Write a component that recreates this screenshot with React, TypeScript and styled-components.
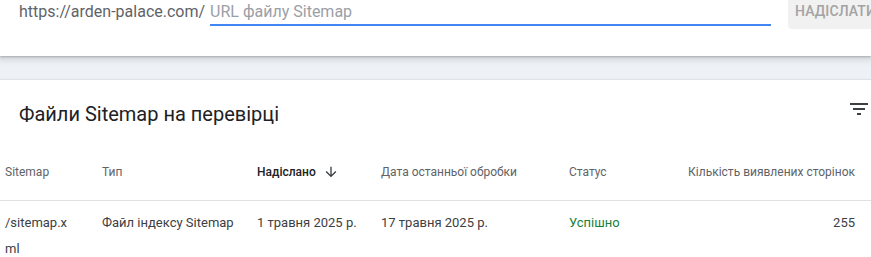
import styled, { createGlobalStyle } from 'styled-components';

const GlobalStyle = createGlobalStyle`
  html, body {
    margin: 0;
    padding: 0;
    background: #eef1f5;
    font-family: Roboto, 'Noto Sans', Arial, sans-serif;
    overflow: hidden;
  }
`;

const Page = styled.div`
  width: 871px;
  height: 257px;
  overflow: hidden;
`;

const SubmitBar = styled.div`
  display: flex;
  align-items: flex-start;
  height: 56px;
  padding-left: 19px;
  background: #fff;
  box-shadow: 0 1px 2px rgba(60, 64, 67, 0.3), 0 2px 6px 2px rgba(60, 64, 67, 0.15);
  position: relative;
  z-index: 1;
  overflow: hidden;
`;

const Prefix = styled.span`
  flex-shrink: 0;
  font-size: 16px;
  line-height: 24px;
  color: #5f6368;
  white-space: nowrap;
  margin-right: 5px;
`;

const UrlInput = styled.input`
  flex-shrink: 0;
  width: 561px;
  height: 26px;
  box-sizing: content-box;
  padding: 0;
  border: none;
  border-bottom: 2px solid #4285f4;
  outline: none;
  font-family: inherit;
  font-size: 16px;
  line-height: 24px;
  color: #202124;
  background: transparent;
  margin-top: -2px;
  &::placeholder {
    color: #9aa0a6;
  }
`;

const SubmitButton = styled.button`
  flex-shrink: 0;
  margin-left: 17px;
  margin-top: -7px;
  height: 36px;
  padding: 0 7px;
  border: none;
  border-radius: 4px;
  background: #f1f1f1;
  color: #a3a3a3;
  font-family: inherit;
  font-size: 14px;
  font-weight: 500;
  letter-spacing: 0.1px;
  white-space: nowrap;
`;

const Card = styled.section`
  margin-top: 24px;
  background: #fff;
  box-shadow: 0 -1px 1px rgba(60, 64, 67, 0.08);
`;

const CardHeader = styled.div`
  display: flex;
  align-items: center;
  justify-content: space-between;
  height: 60px;
  padding: 0 0 0 19px;
`;

const Title = styled.h2`
  margin: 0;
  margin-top: 7px;
  font-size: 20px;
  font-weight: 400;
  color: #202124;
`;

const IconButton = styled.span`
  display: flex;
  width: 24px;
  height: 24px;
  margin-bottom: 3px;
  color: #3c4043;
`;

const Row = styled.div<{ $head?: boolean }>`
  display: grid;
  grid-template-columns: 97px 155px 124px 188px 119px 1fr;
  padding: 0 16px 0 5px;
  font-size: ${(p) => (p.$head ? '12px' : '13px')};
  color: ${(p) => (p.$head ? '#5f6368' : '#3c4043')};
  align-items: ${(p) => (p.$head ? 'center' : 'start')};
  height: ${(p) => (p.$head ? '56px' : 'auto')};
  margin-top: ${(p) => (p.$head ? '4px' : '0')};
  border-bottom: ${(p) => (p.$head ? '1px solid #e0e0e0' : 'none')};
  line-height: ${(p) => (p.$head ? '16px' : '26px')};
  padding-top: ${(p) => (p.$head ? '0' : '9px')};
`;

const Cell = styled.div<{ $right?: boolean; $active?: boolean; $wrap?: boolean; $ok?: boolean }>`
  display: flex;
  align-items: center;
  justify-content: ${(p) => (p.$right ? 'flex-end' : 'flex-start')};
  font-weight: ${(p) => (p.$active ? 500 : 400)};
  color: ${(p) => (p.$active ? '#202124' : p.$ok ? '#188038' : 'inherit')};
  ${(p) => (p.$wrap ? 'max-width: 68px; word-break: break-all;' : 'white-space: nowrap;')}
`;

const SortArrow = styled.svg`
  width: 16px;
  height: 16px;
  margin-left: 7px;
  fill: #3c4043;
`;

export default function App() {
  return (
    <Page>
      <GlobalStyle />
      <SubmitBar>
        <Prefix>https://arden-palace.com/</Prefix>
        <UrlInput placeholder="URL файлу Sitemap" />
        <SubmitButton>НАДІСЛАТИ</SubmitButton>
      </SubmitBar>
      <Card>
        <CardHeader>
          <Title>Файли Sitemap на перевірці</Title>
          <IconButton>
            <svg viewBox="0 0 24 24" width="24" height="24" fill="currentColor">
              <path d="M10 18h4v-2h-4v2zM3 6v2h18V6H3zm3 7h12v-2H6v2z" />
            </svg>
          </IconButton>
        </CardHeader>
        <Row $head>
          <Cell>Sitemap</Cell>
          <Cell>Тип</Cell>
          <Cell $active>
            Надіслано
            <SortArrow viewBox="0 0 24 24">
              <path d="M20 12l-1.41-1.41L13 16.17V4h-2v12.17l-5.58-5.59L4 12l8 8 8-8z" />
            </SortArrow>
          </Cell>
          <Cell>Дата останньої обробки</Cell>
          <Cell>Статус</Cell>
          <Cell $right>Кількість виявлених сторінок</Cell>
        </Row>
        <Row>
          <Cell $wrap>/sitemap.xml</Cell>
          <Cell>Файл індексу Sitemap</Cell>
          <Cell>1 травня 2025 р.</Cell>
          <Cell>17 травня 2025 р.</Cell>
          <Cell $ok>Успішно</Cell>
          <Cell $right>255</Cell>
        </Row>
      </Card>
    </Page>
  );
}
